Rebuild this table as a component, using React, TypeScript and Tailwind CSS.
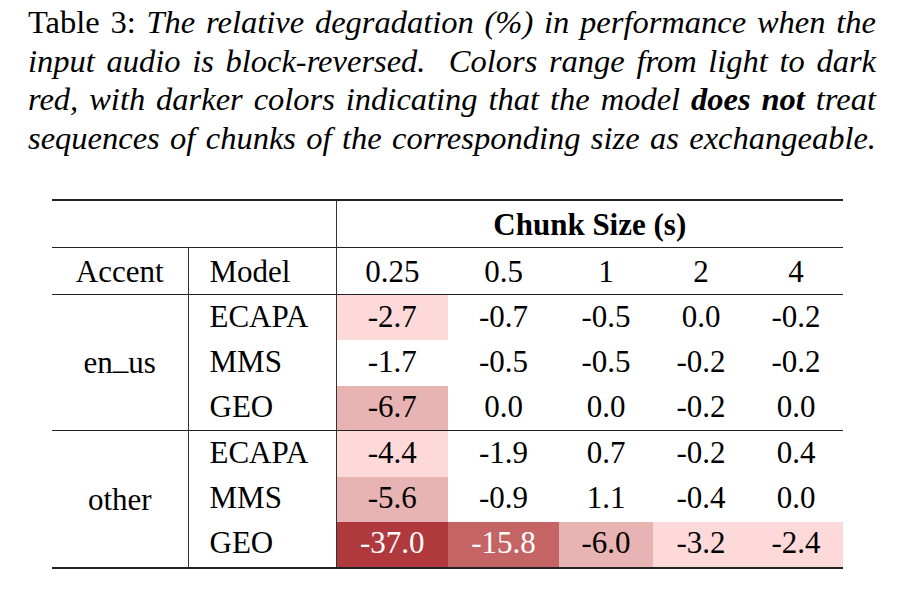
import React from 'react';

type Cell = { v: string; bg?: string; light?: boolean };

const LIGHT = 'bg-[#fdd9d9]';
const MID = 'bg-[#e8b3b3]';

const groups: { accent: React.ReactNode; rows: { model: string; cells: Cell[]; h: string }[] }[] = [
  {
    accent: (
      <>
        en<span className="relative top-[-4px]">_</span>us
      </>
    ),
    rows: [
      { model: 'ECAPA', h: 'h-[45px]', cells: [{ v: '-2.7', bg: LIGHT }, { v: '-0.7' }, { v: '-0.5' }, { v: '0.0' }, { v: '-0.2' }] },
      { model: 'MMS', h: 'h-[46px]', cells: [{ v: '-1.7' }, { v: '-0.5' }, { v: '-0.5' }, { v: '-0.2' }, { v: '-0.2' }] },
      { model: 'GEO', h: 'h-[45px]', cells: [{ v: '-6.7', bg: MID }, { v: '0.0' }, { v: '0.0' }, { v: '-0.2' }, { v: '0.0' }] },
    ],
  },
  {
    accent: 'other',
    rows: [
      { model: 'ECAPA', h: 'h-[46px]', cells: [{ v: '-4.4', bg: LIGHT }, { v: '-1.9' }, { v: '0.7' }, { v: '-0.2' }, { v: '0.4' }] },
      { model: 'MMS', h: 'h-[45px]', cells: [{ v: '-5.6', bg: MID }, { v: '-0.9' }, { v: '1.1' }, { v: '-0.4' }, { v: '0.0' }] },
      {
        model: 'GEO',
        h: 'h-[46px]',
        cells: [
          { v: '-37.0', bg: 'bg-[#b0393d]', light: true },
          { v: '-15.8', bg: 'bg-[#c46464]', light: true },
          { v: '-6.0', bg: MID },
          { v: '-3.2', bg: LIGHT },
          { v: '-2.4', bg: LIGHT },
        ],
      },
    ],
  },
];

const lineCls = 'text-justify [text-align-last:justify] whitespace-nowrap';

export default function App() {
  return (
    <div className="w-[900px] h-[590px] bg-white text-black [font-family:'Liberation_Serif','Times_New_Roman',serif] overflow-hidden">
      {/* caption */}
      <div className="ml-[28px] w-[848px] pt-[3px] text-[32.5px] leading-[38.7px]">
        <div className={lineCls}>
          Table 3: <i>The relative degradation (%) in performance when the</i>
        </div>
        <div className={lineCls}>
          <i>input audio is block-reversed. &nbsp;Colors range from light to dark</i>
        </div>
        <div className={lineCls}>
          <i>
            red, with darker colors indicating that the model <b>does not</b> treat
          </i>
        </div>
        <div className={lineCls}>
          <i>sequences of chunks of the corresponding size as exchangeable.</i>
        </div>
      </div>

      {/* table */}
      <table className="ml-[52px] mt-[41px] w-[791px] table-fixed border-collapse text-[31px] leading-none">
        <colgroup>
          <col className="w-[136px]" />
          <col className="w-[148px]" />
          <col className="w-[112px]" />
          <col className="w-[111px]" />
          <col className="w-[94px]" />
          <col className="w-[96px]" />
          <col className="w-[94px]" />
        </colgroup>
        <thead>
          <tr className="h-[48px] border-t-2 border-[#222]">
            <th colSpan={2} className="border-r border-[#333]" />
            <th colSpan={5} className="font-bold text-[31px] text-center pt-[1px]">
              Chunk Size (s)
            </th>
          </tr>
          <tr className="h-[47px] border-t border-b border-[#222] font-normal">
            <td className="text-center border-r border-[#333]">Accent</td>
            <td className="pl-[21px] border-r border-[#333]">Model</td>
            {['0.25', '0.5', '1', '2', '4'].map((c) => (
              <td key={c} className="text-center">
                {c}
              </td>
            ))}
          </tr>
        </thead>
        {groups.map((g, gi) => (
          <tbody key={gi} className={gi === 0 ? 'border-b border-[#222]' : 'border-b-2 border-[#222]'}>
            {g.rows.map((r, ri) => (
              <tr key={r.model} className={r.h}>
                {ri === 0 && (
                  <td rowSpan={3} className="text-center border-r border-[#333]">
                    {g.accent}
                  </td>
                )}
                <td className="pl-[21px] pb-[3px] border-r border-[#333]">{r.model}</td>
                {r.cells.map((c, ci) => (
                  <td
                    key={ci}
                    className={`text-center pb-[3px] ${c.bg ?? ''} ${c.light ? 'text-white' : ''}`}
                  >
                    {c.v}
                  </td>
                ))}
              </tr>
            ))}
          </tbody>
        ))}
      </table>
    </div>
  );
}
